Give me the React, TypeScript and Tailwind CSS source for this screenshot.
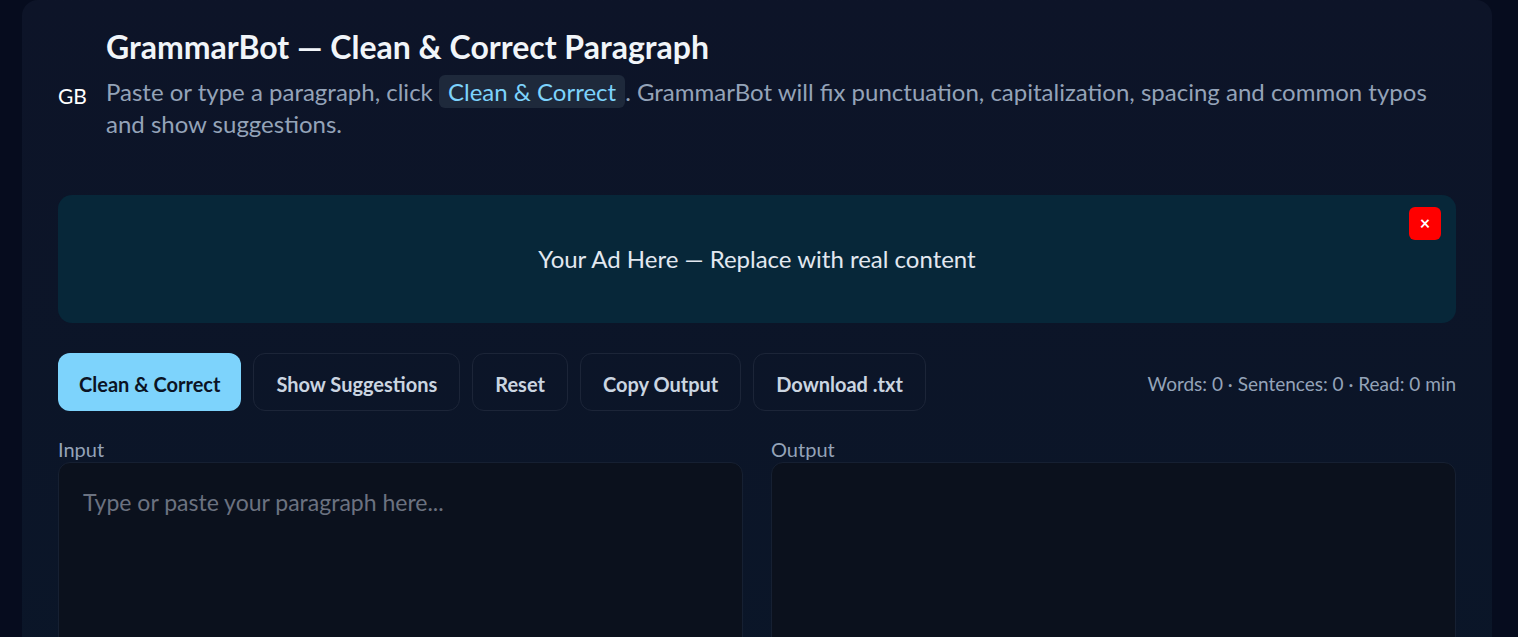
import { useState } from "react";

const buttons = ["Show Suggestions", "Reset", "Copy Output", "Download .txt"];

const App = () => {
  const [input, setInput] = useState("");
  const [showAd, setShowAd] = useState(true);

  const words = input.trim() ? input.trim().split(/\s+/).length : 0;
  const sentences = input.split(/[.!?]+/).filter((s) => s.trim()).length;
  const read = Math.ceil(words / 200);

  return (
    <div
      className="min-h-screen bg-[#060c1e] pl-[22px] pr-[26px] text-[#e2e8f0]"
      style={{ fontFamily: "Lato, 'Noto Sans', sans-serif" }}
    >
      <div className="min-h-[700px] rounded-2xl bg-gradient-to-b from-[#0d1428] to-[#0a1628] px-[36px] pt-[29px] pb-10">
        <header className="flex gap-[18px]">
          <div className="mt-[49px] h-[36px] w-[30px] shrink-0 text-[21px] leading-[36px] text-white">
            GB
          </div>
          <div>
            <h1 className="text-[32px] font-bold leading-[36px] text-[#f1f5f9]">
              GrammarBot — Clean &amp; Correct Paragraph
            </h1>
            <p className="mt-[11px] text-[24px] leading-[32px] text-[#94a3b8]">
              Paste or type a paragraph, click{" "}
              <span className="rounded-md bg-[#1e293b] px-[9px] py-[2px] text-[#7dd3fc]">
                Clean &amp; Correct
              </span>
              . GrammarBot will fix punctuation, capitalization, spacing and
              common typos and show suggestions.
            </p>
          </div>
        </header>

        {showAd && (
          <div className="relative mt-[55px] flex h-[128px] items-center justify-center rounded-[14px] bg-[#072739]">
            <span className="text-[24px] text-[#e2e8f0]">
              Your Ad Here — Replace with real content
            </span>
            <button
              onClick={() => setShowAd(false)}
              className="absolute right-[15px] top-[12px] flex h-[33px] w-[32px] items-center justify-center rounded-md bg-[#ff0000] text-[18px] font-bold text-white"
            >
              ×
            </button>
          </div>
        )}

        <div className="mt-[30px] flex items-center gap-3">
          <button className="h-[58px] rounded-xl bg-[#7dd3fc] px-[21px] pt-[4px] text-[20px] font-bold text-[#0b1324]">
            Clean &amp; Correct
          </button>
          {buttons.map((label) => (
            <button
              key={label}
              className="h-[58px] rounded-xl border border-[#1c2538] px-[22px] pt-[4px] text-[20px] font-bold text-[#cbd5e1]"
              onClick={() => label === "Reset" && setInput("")}
            >
              {label}
            </button>
          ))}
          <div className="ml-auto pt-[4px] text-[19px] text-[#94a3b8]">
            Words: {words} · Sentences: {sentences} · Read: {read} min
          </div>
        </div>

        <div className="mt-[26px] grid grid-cols-2 gap-[28px]">
          <div>
            <label className="block text-[20px] leading-[24px] text-[#94a3b8]">
              Input
            </label>
            <textarea
              value={input}
              onChange={(e) => setInput(e.target.value)}
              placeholder="Type or paste your paragraph here..."
              className="mt-[1px] h-[260px] w-full resize-none rounded-xl border border-[#162032] bg-[#0b111d] px-[24px] py-[22px] text-[23px] text-[#e2e8f0] outline-none placeholder:text-[#6b7280]"
            />
          </div>
          <div>
            <label className="block text-[20px] leading-[24px] text-[#94a3b8]">
              Output
            </label>
            <div className="mt-[1px] h-[260px] w-full rounded-xl border border-[#162032] bg-[#0b111d]" />
          </div>
        </div>
      </div>
    </div>
  );
};

export default App;
